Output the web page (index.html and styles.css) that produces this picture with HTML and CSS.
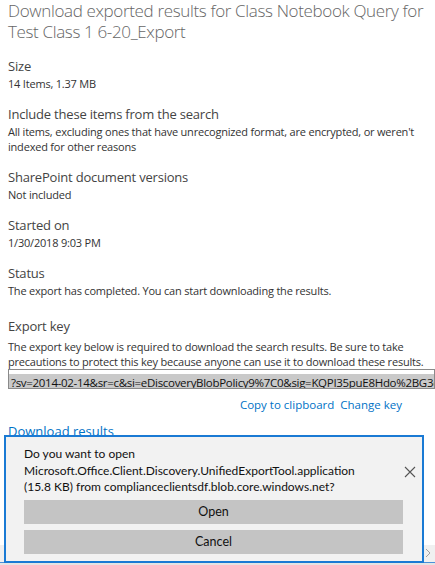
FILE: index.html
```html
<!DOCTYPE html>
<html lang="en">

<head>
  <meta charset="UTF-8">
  <title>Download exported results</title>
  <link rel="stylesheet" href="styles.css">
</head>

<body>
  <div class="panel">
    <h1 class="title">Download exported results for Class Notebook Query for Test Class 1 6-20_Export</h1>

    <div class="field">
      <div class="label">Size</div>
      <div class="value">14 Items, 1.37 MB</div>
    </div>

    <div class="field">
      <div class="label">Include these items from the search</div>
      <div class="value">All items, excluding ones that have unrecognized format, are encrypted, or weren't indexed for other reasons</div>
    </div>

    <div class="field">
      <div class="label">SharePoint document versions</div>
      <div class="value">Not included</div>
    </div>

    <div class="field">
      <div class="label">Started on</div>
      <div class="value">1/30/2018 9:03 PM</div>
    </div>

    <div class="field">
      <div class="label">Status</div>
      <div class="value">The export has completed. You can start downloading the results.</div>
    </div>

    <div class="field field-key">
      <div class="label">Export key</div>
      <div class="value">The export key below is required to download the search results. Be sure to take precautions to protect this key because anyone can use it to download these results.</div>
      <div class="key-box"><span class="key-text">?sv=2014-02-14&amp;sr=c&amp;si=eDiscoveryBlobPolicy9%7C0&amp;sig=KQPI35puE8Hdo%2BG3dX7uRk4mX0sFqJ2p</span></div>
      <div class="key-actions">
        <a href="#" class="link">Copy to clipboard</a>
        <a href="#" class="link">Change key</a>
      </div>
    </div>

    <a href="#" class="download">Download results</a>
  </div>

  <!-- page scrollbar and window edge under the prompt -->
  <div class="hscroll">
    <svg class="arrow" width="6" height="10" viewBox="0 0 6 10">
      <path d="M1 1 L5 5 L1 9" stroke="#a0a0a0" stroke-width="1" fill="none" />
    </svg>
  </div>
  <div class="frame-edge"></div>

  <!-- browser download prompt docked at the bottom -->
  <div class="notify">
    <div class="notify-head">
      <div class="notify-text">
        <div>Do you want to open</div>
        <div>Microsoft.Office.Client.Discovery.UnifiedExportTool.application</div>
        <div>(15.8 KB) from complianceclientsdf.blob.core.windows.net?</div>
      </div>
      <svg class="close" width="12" height="12" viewBox="0 0 12 12">
        <path d="M1 1 L11 11 M11 1 L1 11" stroke="#555" stroke-width="1.1" fill="none" />
      </svg>
    </div>
    <button class="notify-btn">Open</button>
    <button class="notify-btn">Cancel</button>
  </div>
</body>

</html>
```

FILE: styles.css
```css
html,
body {
  margin: 0;
  height: 100%;
  overflow: hidden;
  background: #fff;
}

body {
  font-family: "Open Sans", "Noto Sans", sans-serif;
  color: #333;
}

.panel {
  padding: 0 3px 0 8px;
}

.title {
  margin: 0 0 15px;
  font-size: 17px;
  line-height: 21px;
  font-weight: 300;
  color: #666;
  letter-spacing: -0.35px;
}

.field {
  margin-bottom: 14px;
}

.field-key {
  padding-top: 5px;
}

.field-key .value {
  margin-top: 3px;
}

.label {
  font-size: 13px;
  line-height: 19px;
  color: #444;
  letter-spacing: -0.2px;
}

.value {
  font-size: 11px;
  line-height: 15px;
  color: #333;
  letter-spacing: -0.2px;
}

.key-box {
  margin-top: 0;
  height: 18px;
  border: 1px solid #8a8a8a;
  overflow: hidden;
  white-space: nowrap;
  margin-right: -3px;
}

.key-text {
  display: inline-block;
  background: #c9c9c9;
  color: #111;
  font-size: 11.5px;
  line-height: 18px;
  padding-left: 2px;
  letter-spacing: -0.3px;
}

.key-actions {
  display: flex;
  justify-content: flex-end;
  gap: 6px;
  margin-top: 8px;
  padding-right: 30px;
}

.link {
  color: #0072c6;
  font-size: 11.5px;
  line-height: 16px;
  text-decoration: none;
}

.download {
  display: block;
  margin-top: -5px;
  color: #0072c6;
  font-size: 13px;
  line-height: 19px;
  text-decoration: none;
}

.notify {
  position: fixed;
  left: 4px;
  top: 435px;
  width: 420px;
  height: 128px;
  background: #f2f2f2;
  border: 2px solid #1a7ad4;
  padding: 9px 19px 0 18px;
  box-sizing: border-box;
}

.notify-head {
  display: flex;
  align-items: center;
  justify-content: space-between;
}

.notify-text {
  font-family: "Lato", sans-serif;
  font-size: 12px;
  line-height: 16.5px;
  color: #111;
}

.close {
  margin-right: -13px;
  margin-top: 2px;
}

.notify-btn {
  display: block;
  width: 100%;
  height: 24px;
  margin-top: 4px;
  border: 0;
  background: #c4c4c4;
  font-family: "Lato", sans-serif;
  font-size: 12.5px;
  color: #111;
  padding: 0;
}

.notify-btn + .notify-btn {
  margin-top: 6px;
}

.hscroll {
  position: fixed;
  left: 0;
  right: 0;
  bottom: 3px;
  height: 17px;
  background: #f0f0f0;
}

.arrow {
  position: absolute;
  right: 4px;
  top: 3px;
}

.frame-edge {
  position: fixed;
  left: 0;
  right: 0;
  bottom: 0;
  height: 2px;
  background: #e4e4e4;
  border-top: 1px solid #4a90d9;
}
```
